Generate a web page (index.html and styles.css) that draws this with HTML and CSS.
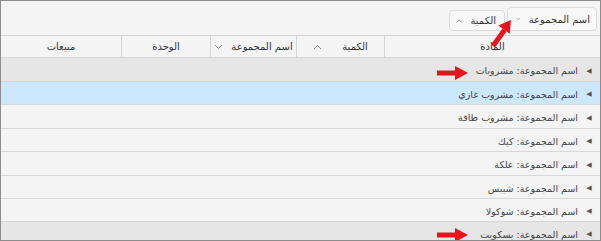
FILE: index.html
```html
<!DOCTYPE html>
<html lang="ar" dir="rtl">
<head>
    <meta charset="UTF-8">
    <title>المبيعات</title>
    <link rel="stylesheet" href="styles.css">
</head>
<body>
    <div class="grid-frame">
        <div class="group-bar">
            <div class="chip chip-main">
                <span>اسم المجموعة</span>
                <svg class="chev" width="9" height="6" viewBox="0 0 9 6"><path d="M1 1l3.5 3.5L8 1" fill="none" stroke="#666" stroke-width="1"/></svg>
            </div>
            <div class="chip">
                <span>الكمية</span>
                <svg class="chev" width="9" height="6" viewBox="0 0 9 6"><path d="M1 5l3.5-3.5L8 5" fill="none" stroke="#666" stroke-width="1"/></svg>
            </div>
        </div>

        <div class="head">
            <div class="col">المادة</div>
            <div class="col">
                <span>الكمية</span>
                <svg class="chev" width="9" height="6" viewBox="0 0 9 6"><path d="M1 5l3.5-3.5L8 5" fill="none" stroke="#888" stroke-width="1"/></svg>
            </div>
            <div class="col col-tight">
                <span>اسم المجموعة</span>
                <svg class="chev" width="9" height="6" viewBox="0 0 9 6"><path d="M1 1l3.5 3.5L8 1" fill="none" stroke="#888" stroke-width="1"/></svg>
            </div>
            <div class="col">الوحدة</div>
            <div class="col">مبيعات</div>
        </div>

        <div class="rows">
            <div class="row row-group tall"><span class="toggle">◀</span>اسم المجموعة: مشروبات</div>
            <div class="row row-selected"><span class="toggle">◀</span>اسم المجموعة: مشروب غازي</div>
            <div class="row tall"><span class="toggle">◀</span>اسم المجموعة: مشروب طاقة</div>
            <div class="row"><span class="toggle">◀</span>اسم المجموعة: كيك</div>
            <div class="row tall"><span class="toggle">◀</span>اسم المجموعة: علكة</div>
            <div class="row"><span class="toggle">◀</span>اسم المجموعة: شيبس</div>
            <div class="row"><span class="toggle">◀</span>اسم المجموعة: شوكولا</div>
            <div class="row row-group"><span class="toggle">◀</span>اسم المجموعة: بسكويت</div>
        </div>

        <!-- annotation arrows -->
        <svg class="arrow arrow-up" width="28" height="34" viewBox="0 0 28 34">
            <path d="M5 31L16.5 15" stroke="#e8141b" stroke-width="5"/>
            <path d="M23 5L21.7 18.8L10.3 10.6Z" fill="#e8141b"/>
        </svg>
        <svg class="arrow arrow-top" width="32" height="14" viewBox="0 0 32 14">
            <path d="M0 7H20" stroke="#e8141b" stroke-width="5"/>
            <path d="M31 7L18 0V14Z" fill="#e8141b"/>
        </svg>
        <svg class="arrow arrow-bottom" width="32" height="14" viewBox="0 0 32 14">
            <path d="M0 7H20" stroke="#e8141b" stroke-width="5"/>
            <path d="M31 7L18 0V14Z" fill="#e8141b"/>
        </svg>
    </div>
</body>
</html>
```

FILE: styles.css
```css
body {
    margin: 0;
    font-family: 'DejaVu Sans', sans-serif;
    background: #ffffff;
}

.grid-frame {
    position: relative;
    width: 601px;
    height: 241px;
    box-sizing: border-box;
    border: 1px solid #8c8c8c;
    background: #f4f4f4;
    overflow: hidden;
}

.group-bar {
    height: 35px;
    display: flex;
    align-items: flex-start;
    gap: 2px;
    padding: 6px 3px 0 0;
    box-sizing: border-box;
    border-bottom: 1px solid #d6d6d6;
}

.chip {
    display: flex;
    align-items: center;
    justify-content: space-between;
    gap: 8px;
    width: 56px;
    box-sizing: border-box;
    height: 21px;
    margin-top: 3px;
    padding: 0 8px 0 6px;
    background: #f8f8f8;
    border: 1px solid #dcdcdc;
    border-radius: 4px;
    font-size: 10px;
    color: #333;
    white-space: nowrap;
}

.chip-main {
    width: 90px;
    height: 24px;
    margin-top: 0;
    padding: 0 6px 0 8px;
}

.head {
    display: grid;
    grid-template-columns: 216px 88px 86px 89px 1fr;
    height: 21px;
    border-bottom: 1px solid #d6d6d6;
    font-size: 10px;
    color: #333;
}

.col {
    display: flex;
    align-items: center;
    justify-content: center;
    gap: 20px;
    white-space: nowrap;
    border-left: 1px solid #d6d6d6;
}

.col-tight {
    gap: 8px;
}

.col:last-child {
    border-left: none;
}

.row {
    display: flex;
    align-items: center;
    height: 23px;
    padding-top: 2px;
    box-sizing: border-box;
    border-bottom: 1px solid #d8d8d8;
    font-size: 9.5px;
    color: #444;
}

.row.tall {
    height: 24px;
}

.toggle {
    width: 22px;
    text-align: center;
    font-size: 7px;
    color: #555;
}

.row-group {
    background: #e6e6e6;
}

.row-selected {
    background: #cce8fe;
}

.arrow {
    position: absolute;
}

.arrow-up {
    left: 487px;
    top: 14px;
}

.arrow-top {
    left: 436px;
    top: 65px;
}

.arrow-bottom {
    left: 436px;
    top: 227px;
}
```
